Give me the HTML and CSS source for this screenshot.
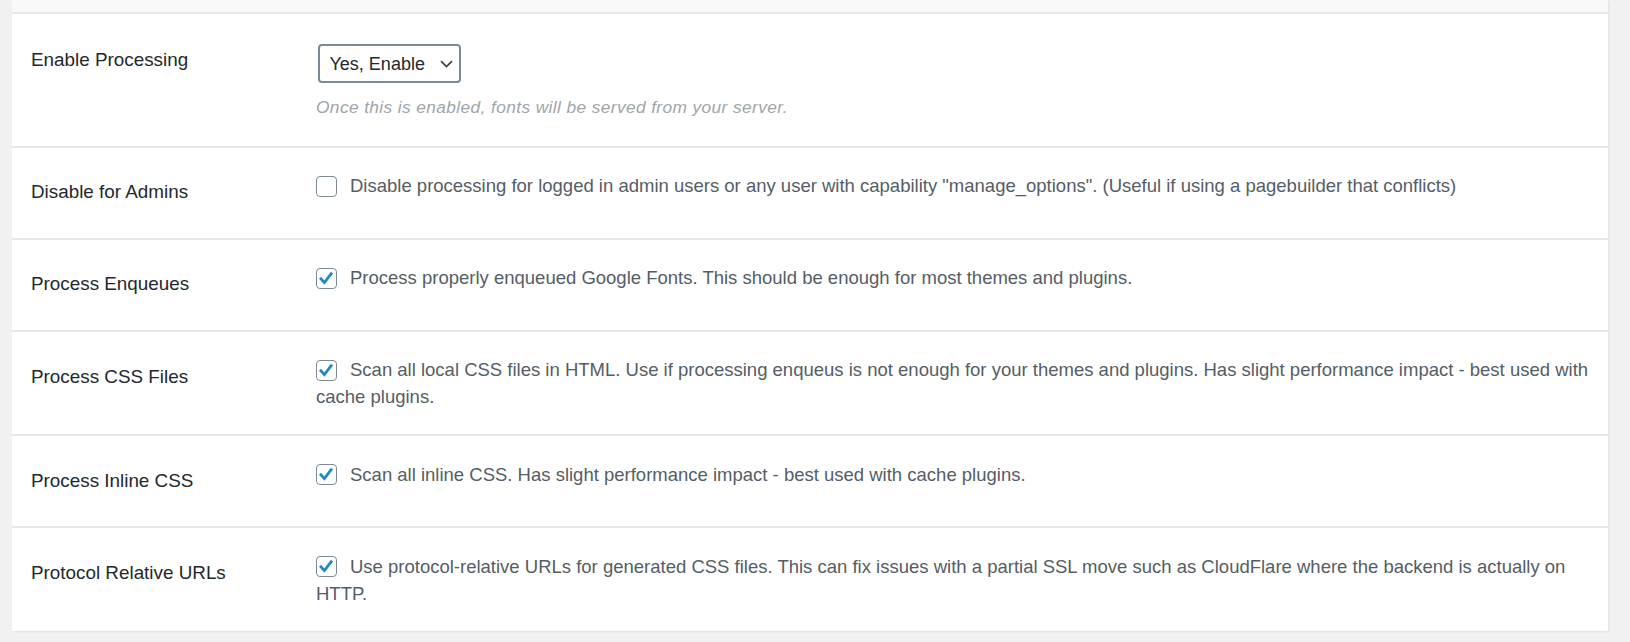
FILE: index.html
```html
<!DOCTYPE html>
<html lang="en">
<head>
<meta charset="utf-8">
<title>Settings</title>
<link rel="stylesheet" href="styles.css">
</head>
<body>
<div class="panel">
  <div class="panel-top"></div>

  <div class="row row-first">
    <div class="label">Enable Processing</div>
    <div class="field">
      <span class="select-wrap">
        <select class="select"><option>Yes, Enable</option><option>No</option></select>
        <svg class="chevron" width="13" height="8" viewBox="0 0 13 8"><path d="M1 1.2 L6.5 6.6 L12 1.2" fill="none" stroke="#3c434a" stroke-width="1.8"/></svg>
      </span>
      <p class="help">Once this is enabled, fonts will be served from your server.</p>
    </div>
  </div>

  <div class="row">
    <div class="label">Disable for Admins</div>
    <div class="field">
      <span class="cb"></span>Disable processing for logged in admin users or any user with capability "manage_options". (Useful if using a pagebuilder that conflicts)
    </div>
  </div>

  <div class="row">
    <div class="label">Process Enqueues</div>
    <div class="field">
      <span class="cb"><svg viewBox="0 0 18 18" width="18" height="18"><path d="M3 8.8 L7.4 13.6 L15 3.6" fill="none" stroke="#1e8cbe" stroke-width="2.8"/></svg></span>Process properly enqueued Google Fonts. This should be enough for most themes and plugins.
    </div>
  </div>

  <div class="row">
    <div class="label">Process CSS Files</div>
    <div class="field">
      <span class="cb"><svg viewBox="0 0 18 18" width="18" height="18"><path d="M3 8.8 L7.4 13.6 L15 3.6" fill="none" stroke="#1e8cbe" stroke-width="2.8"/></svg></span>Scan all local CSS files in HTML. Use if processing enqueus is not enough for your themes and plugins. Has slight performance impact - best used with cache plugins.
    </div>
  </div>

  <div class="row">
    <div class="label">Process Inline CSS</div>
    <div class="field">
      <span class="cb"><svg viewBox="0 0 18 18" width="18" height="18"><path d="M3 8.8 L7.4 13.6 L15 3.6" fill="none" stroke="#1e8cbe" stroke-width="2.8"/></svg></span>Scan all inline CSS. Has slight performance impact - best used with cache plugins.
    </div>
  </div>

  <div class="row row-last">
    <div class="label">Protocol Relative URLs</div>
    <div class="field">
      <span class="cb"><svg viewBox="0 0 18 18" width="18" height="18"><path d="M3 8.8 L7.4 13.6 L15 3.6" fill="none" stroke="#1e8cbe" stroke-width="2.8"/></svg></span>Use protocol-relative URLs for generated CSS files. This can fix issues with a partial SSL move such as CloudFlare where the backend is actually on HTTP.
    </div>
  </div>
</div>
</body>
</html>
```
FILE: styles.css
```css
html, body {
  margin: 0;
  padding: 0;
  background: #f1f1f1;
}
body {
  font-family: "Liberation Sans", Arial, Helvetica, sans-serif;
  font-size: 18.85px;
  line-height: 26.67px;
  color: #23282d;
  height: 642px;
  overflow: hidden;
}
.panel {
  margin: 0 22px 0 12px;
  background: #fff;
  box-shadow: 1px 1px 2px rgba(0, 0, 0, 0.07);
}
.panel-top {
  height: 12px;
  background: #f9f9f9;
  border-bottom: 2px solid #e8e8e8;
}
.row {
  display: grid;
  grid-template-columns: 304px 1fr;
  border-bottom: 2px solid #e8e8e8;
}
.row-last {
  border-bottom: none;
}
.label {
  padding: 31.75px 0 31.75px 19px;
  color: #23282d;
}
.row-first .label {
  padding-top: 33px;
}
.field {
  padding: 25.5px 12px 23.5px 0;
  font-size: 18.5px;
  color: #555d66;
}
.row-first .field {
  padding-top: 30px;
  padding-bottom: 26.5px;
}
.select-wrap {
  position: relative;
  display: inline-block;
  vertical-align: top;
  margin-left: 1.5px;
}
.select {
  -webkit-appearance: none;
  appearance: none;
  display: block;
  width: 143px;
  height: 39px;
  margin: 0;
  padding: 0 24px 0 10px;
  border: 2px solid #7e8993;
  border-radius: 4px;
  background: #fff;
  font-family: "Liberation Sans", Arial, Helvetica, sans-serif;
  font-size: 18px;
  color: #23282d;
}
.chevron {
  position: absolute;
  right: 8px;
  top: 16px;
  pointer-events: none;
}
.help {
  margin: 12px 0 0;
  font-size: 17.33px;
  letter-spacing: 0.38px;
  line-height: 24px;
  font-style: italic;
  color: #a0a5aa;
}
.cb {
  display: inline-block;
  box-sizing: border-box;
  width: 21px;
  height: 21px;
  border: 1.5px solid #7e8993;
  border-radius: 4px;
  background: #fff;
  overflow: hidden;
  vertical-align: -4.5px;
  margin-right: 13px;
}
.cb svg {
  display: block;
}
```
